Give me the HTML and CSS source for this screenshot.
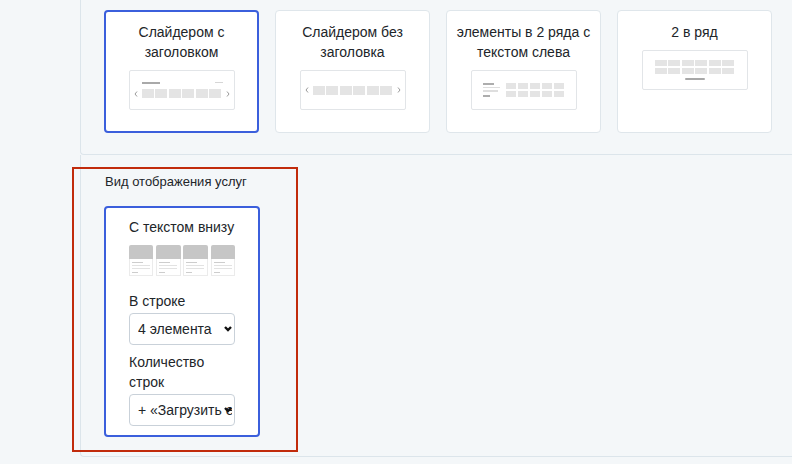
FILE: index.html
```html
<!DOCTYPE html>
<html lang="ru">
<head>
  <meta charset="UTF-8">
  <title>Настройки блока</title>
  <link rel="stylesheet" href="styles.css">
</head>
<body>
  <section class="panel panel-layouts">
    <div class="cards">
      <div class="card selected">
        <div class="card-title">Слайдером с заголовком</div>
        <div class="preview">
          <div class="pv-head"><span class="bar-dark"></span><span class="bar-light"></span></div>
          <div class="pv-slider">
            <svg class="chev" viewBox="0 0 4 6"><polyline points="3,0.5 1,3 3,5.5"/></svg>
            <div class="cells cells-6"><i></i><i></i><i></i><i></i><i></i><i></i></div>
            <svg class="chev" viewBox="0 0 4 6"><polyline points="1,0.5 3,3 1,5.5"/></svg>
          </div>
        </div>
      </div>

      <div class="card">
        <div class="card-title">Слайдером без заголовка</div>
        <div class="preview preview-center">
          <div class="pv-slider">
            <svg class="chev" viewBox="0 0 4 6"><polyline points="3,0.5 1,3 3,5.5"/></svg>
            <div class="cells cells-6"><i></i><i></i><i></i><i></i><i></i><i></i></div>
            <svg class="chev" viewBox="0 0 4 6"><polyline points="1,0.5 3,3 1,5.5"/></svg>
          </div>
        </div>
      </div>

      <div class="card">
        <div class="card-title">элементы в 2 ряда с текстом слева</div>
        <div class="preview preview-side">
          <div class="pv-text">
            <span class="t1"></span><span class="t2"></span><span class="t3"></span><span class="t4"></span>
          </div>
          <div class="cells cells-5 cells-flat">
            <i></i><i></i><i></i><i></i><i></i><i></i><i></i><i></i><i></i><i></i>
          </div>
        </div>
      </div>

      <div class="card">
        <div class="card-title">2 в ряд</div>
        <div class="preview preview-grid">
          <div class="cells cells-6 cells-flat">
            <i></i><i></i><i></i><i></i><i></i><i></i><i></i><i></i><i></i><i></i><i></i><i></i>
          </div>
          <span class="pv-button"></span>
        </div>
      </div>
    </div>
  </section>

  <section class="panel panel-services">
    <div class="field-group highlighted">
      <div class="group-label">Вид отображения услуг</div>
      <div class="option-card selected">
        <div class="option-title">С текстом внизу</div>
        <div class="tiles">
          <div class="tile"><div class="tile-img"></div><div class="tile-body"><span class="l1"></span><span class="l2"></span><span class="l3"></span><span class="l4"></span></div></div>
          <div class="tile"><div class="tile-img"></div><div class="tile-body"><span class="l1"></span><span class="l2"></span><span class="l3"></span><span class="l4"></span></div></div>
          <div class="tile"><div class="tile-img"></div><div class="tile-body"><span class="l1"></span><span class="l2"></span><span class="l3"></span><span class="l4"></span></div></div>
          <div class="tile"><div class="tile-img"></div><div class="tile-body"><span class="l1"></span><span class="l2"></span><span class="l3"></span><span class="l4"></span></div></div>
        </div>

        <label class="field-label" for="perRow">В строке</label>
        <div class="select-wrap">
          <select id="perRow" class="form-select">
            <option>4 элемента</option>
            <option>3 элемента</option>
            <option>2 элемента</option>
          </select>
          <svg class="select-arrow" viewBox="0 0 8 5"><polyline points="1,1 4,4 7,1"/></svg>
        </div>

        <label class="field-label field-label-gap" for="rows">Количество строк</label>
        <div class="select-wrap">
          <select id="rows" class="form-select">
            <option>+ «Загрузить ещё»</option>
            <option>1</option>
            <option>2</option>
          </select>
          <svg class="select-arrow" viewBox="0 0 8 5"><polyline points="1,1 4,4 7,1"/></svg>
        </div>
      </div>
    </div>
  </section>
</body>
</html>
```

FILE: styles.css
```css
html, body {
  overflow: hidden;
}

body {
  margin: 0;
  background-color: #f4f7f9;
  color: #212529;
  font-family: "Liberation Sans", Arial, sans-serif;
  font-size: 14px;
}

.panel {
  margin-left: 80px;
  border: 1px solid #dce5eb;
  border-right: none;
  border-radius: 0 0 0 4px;
}

.panel-layouts {
  margin-top: -20px;
  padding: 29px 0 21px 23px;
}

.panel-services {
  border-top: none;
  padding: 14px 0 6px 0;
}

/* layout cards */
.cards {
  display: flex;
  gap: 16px;
}

.card {
  box-sizing: border-box;
  width: 155px;
  height: 123px;
  background: #fff;
  border: 1px solid #dfe6eb;
  border-radius: 4px;
  padding: 11px 6px 0;
  display: flex;
  flex-direction: column;
  align-items: center;
}

.card.selected {
  border: 2px solid #3b5fdc;
  padding: 10px 5px 0;
}

.card-title {
  text-align: center;
  line-height: 20px;
}

.preview {
  box-sizing: border-box;
  width: 106px;
  height: 40px;
  margin-top: 8px;
  border: 1px solid #e2e5e8;
  border-radius: 2px;
  background: #fff;
  padding-top: 11px;
}

.pv-head {
  display: flex;
  justify-content: space-between;
  align-items: flex-start;
  padding: 0 11px 0 12px;
  height: 2px;
}

.bar-dark {
  width: 18px;
  height: 2px;
  background: #a9a9a9;
}

.bar-light {
  width: 8px;
  height: 1px;
  background: #d6d6d6;
}

.pv-slider {
  display: flex;
  justify-content: space-between;
  align-items: center;
  padding: 0 4px;
  margin-top: 5px;
  height: 9px;
}

.chev {
  width: 4px;
  height: 6px;
}

.chev polyline {
  fill: none;
  stroke: #9a9a9a;
  stroke-width: 1;
}

.cells {
  display: grid;
  gap: 1.6px;
}

.cells i {
  display: block;
  background: #e4e4e4;
}

.cells-6 {
  width: 80px;
  grid-template-columns: repeat(6, 1fr);
}

.cells-6 i {
  height: 9px;
}

.cells-flat i {
  height: 6px;
}

.cells-5 {
  width: 59px;
  grid-template-columns: repeat(5, 1fr);
}

.preview-center {
  padding-top: 0;
  display: flex;
  flex-direction: column;
  justify-content: center;
}

.preview-center .pv-slider {
  margin-top: 0;
}

.preview-side {
  padding-top: 0;
  display: flex;
  align-items: center;
  justify-content: center;
  gap: 6px;
}

.pv-text {
  display: flex;
  flex-direction: column;
  width: 17px;
}

.pv-text span {
  height: 1.5px;
  background: #dedede;
}

.pv-text .t1 { width: 11px; background: #adadad; }
.pv-text .t2 { width: 17px; margin-top: 2px; }
.pv-text .t3 { width: 15px; margin-top: 2px; }
.pv-text .t4 { width: 7px; margin-top: 3.5px; background: #adadad; }

.preview-grid {
  padding-top: 9px;
  display: flex;
  flex-direction: column;
  align-items: center;
}

.pv-button {
  width: 20px;
  height: 2.5px;
  margin-top: 4px;
  border-radius: 2px;
  background: #a8a8a8;
}

/* services section */
.field-group {
  box-sizing: border-box;
  width: 222px;
  margin-left: -7px;
  padding: 5px 0 13px 30px;
}

.highlighted {
  outline: 2px solid #c12b0c;
}

.group-label {
  font-size: 13px;
  line-height: 16px;
  padding-left: 1px;
}

.option-card {
  box-sizing: border-box;
  width: 156px;
  margin-top: 16px;
  background: #fff;
  border: 2px solid #3b5fdc;
  border-radius: 4px;
  padding: 9px 23px 9px;
}

.option-title {
  line-height: 20px;
}

.tiles {
  display: grid;
  grid-template-columns: repeat(4, 1fr);
  gap: 2.7px;
  margin-top: 8px;
}

.tile-img {
  height: 14px;
  background: #c6c6c6;
  border-radius: 2px 2px 0 0;
}

.tile-body {
  height: 17px;
  border: 1px solid #ebebeb;
  border-top: none;
  box-sizing: border-box;
  padding: 3px 2px 0;
  display: flex;
  flex-direction: column;
}

.tile-body span {
  height: 1.4px;
  background: #e2e2e2;
}

.tile-body .l1 { width: 11px; background: #cdcdcd; }
.tile-body .l2 { width: 18px; margin-top: 1.5px; }
.tile-body .l3 { width: 18px; margin-top: 1.5px; }
.tile-body .l4 { width: 6px; margin-top: 2.5px; background: #cdcdcd; }

.field-label {
  display: block;
  line-height: 20px;
  margin-top: 15px;
  margin-bottom: 2px;
}

.field-label-gap {
  margin-top: 7px;
}

.select-wrap {
  position: relative;
  width: 106px;
}

.form-select {
  appearance: none;
  -webkit-appearance: none;
  box-sizing: border-box;
  width: 106px;
  height: 32px;
  border: 1px solid #c9d1d9;
  border-radius: 4px;
  background: #fff;
  padding: 0 2px 0 8px;
  font-family: "Liberation Sans", Arial, sans-serif;
  font-size: 14px;
  color: #212529;
}

.select-arrow {
  position: absolute;
  right: 3px;
  top: 13px;
  width: 8px;
  height: 5px;
  overflow: visible;
  pointer-events: none;
}

.select-arrow polyline {
  fill: none;
  stroke: #111;
  stroke-width: 2.4;
}
```
